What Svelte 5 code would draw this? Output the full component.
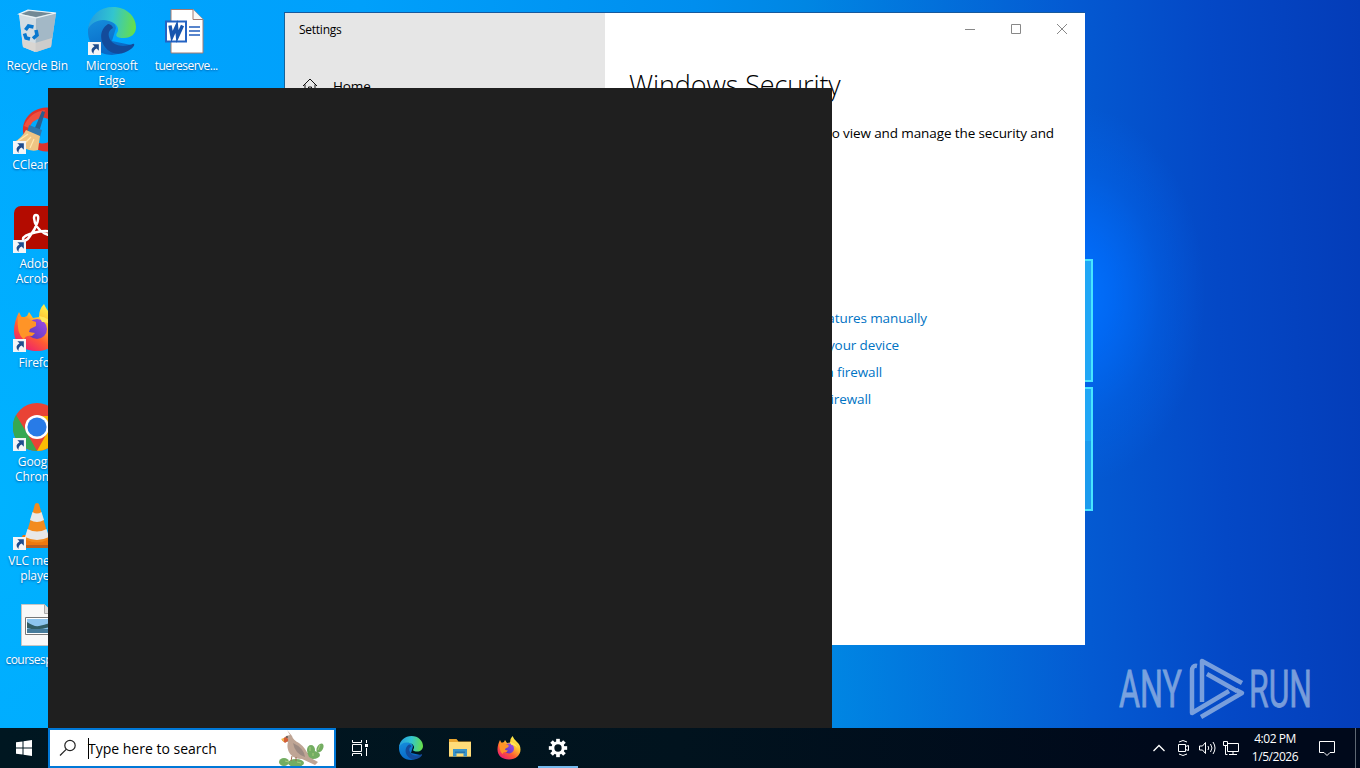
<script lang="ts">
	const shortcuts = [
		{ icon: 'bin', lines: ['Recycle Bin'], row: 1, col: 1 },
		{ icon: 'ccleaner', lines: ['CCleaner'], row: 2, col: 1, linked: true },
		{ icon: 'acrobat', lines: ['Adobe', 'Acrobat'], row: 3, col: 1, linked: true },
		{ icon: 'firefox', lines: ['Firefox'], row: 4, col: 1, linked: true },
		{ icon: 'chrome', lines: ['Google', 'Chrome'], row: 5, col: 1, linked: true },
		{ icon: 'vlc', lines: ['VLC media', 'player'], row: 6, col: 1, linked: true },
		{ icon: 'image', lines: ['coursesp...'], row: 7, col: 1, tight: true },
		{ icon: 'edge', lines: ['Microsoft', 'Edge'], row: 1, col: 2, linked: true },
		{ icon: 'word', lines: ['tuereserve...'], row: 1, col: 3, tight: true }
	];

	const links = [
		{ text: 'features manually', end: 298 },
		{ text: 'your device', end: 270 },
		{ text: 'a firewall', end: 253 },
		{ text: 'firewall', end: 242 }
	];

	const tasks = ['edge', 'explorer', 'firefox', 'gear'];
</script>

{#snippet glyph(name: string, uid: string)}
	<svg class="glyph" viewBox="0 0 48 48">
		{#if name === 'bin'}
			<path d="M6 7l9-4 28 3-5 34-15 5-13-5z" fill="#b9cdd8" />
			<path d="M6 7l17 4-1 34-12-5z" fill="#d3dde3" />
			<path d="M23 11l20-5-5 34-15 5z" fill="#a3b8c6" />
			<path d="M8 7l8-3 24 2-17 4z" fill="#728995" />
			<path d="M6 7l9-4 28 3-20 5z" fill="none" stroke="#eef4f6" stroke-width="1.2" />
			<path d="M9 33l13 3 17-5-1 9-15 5-13-5z" fill="#dbd3cc" opacity=".75" />
			<g fill="none" stroke="#0878cf" stroke-width="3.6">
				<path d="M12.500 23l3-4 5 1M23 23l1 5-4 3.500M17 32l-4-1-1.500-4.500" />
			</g>
		{:else if name === 'edge'}
			<defs>
				<linearGradient id="{uid}-top" x1="0" y1=".4" x2="1" y2=".5">
					<stop stop-color="#249cdf" /><stop offset=".5" stop-color="#32c5cf" /><stop offset="1" stop-color="#68df48" />
				</linearGradient>
				<linearGradient id="{uid}-side" x1="0" y1="0" x2=".4" y2="1">
					<stop stop-color="#168fdd" /><stop offset="1" stop-color="#0868c6" />
				</linearGradient>
			</defs>
			<path d="M0 22C2 12 10 10 18 12q9 2 10 9L24 34l19 4q-6 9-19 10C9 48-1 37 0 22z" fill="url(#{uid}-side)" />
			<path d="M0 22C2 8 12 0 25 0c14 0 23 10 23 20 0 7-5 11-12 11-7 0-9-2-7-5 3-4 0-10-8-12C12 11 4 15 0 22z" fill="url(#{uid}-top)" />
			<path d="M20 17c-8 5-9 16-3 23 6 8 17 9 26 2 2-2 4-4 3-5s-3 1-5 1c-9 3-18-1-20-8-1-4 0-7 4-9-1-3-3-4-5-4z" fill="#134b9b" />
		{:else if name === 'word'}
			<path d="M9 2.500h22l10 10V46H9z" fill="#fff" stroke="#a37b72" />
			<path d="M31 2.500v10h10" fill="#f8f8f8" stroke="#a37b72" />
			<path d="M27 20h11M27 24h11M27 28h11" stroke="#225ebc" stroke-width="1.3" />
			<rect x="4" y="14.5" width="20" height="20" fill="#fff" stroke="#2463c3" stroke-width="2" />
			<path d="M8 18.500l2 11 4.500-10 1 10 5-11" fill="none" stroke="#1855ae" stroke-width="3.400" />
		{:else if name === 'ccleaner'}
			<path d="M45 4A24 22 0 1 0 45 43L38 34A13 13 0 1 1 38 15z" fill="#de332b" />
			<path d="M11 20Q17 6 32 4l-4 8q-9 2-12 10z" fill="#f0503f" />
			<path d="M29 5l3 1-6 20-5-2z" fill="#285f8f" />
			<path d="M16 19l13 5-2 7-13-4z" fill="#2f78ae" />
			<path d="M13 24l14 6-2 14q-10 3-24-8 8-4 12-12z" fill="#efc583" />
			<path d="M5 35l10-7M10 39l8-8M17 42l4-9" stroke="#ffe7ad" stroke-width="1.2" />
		{:else if name === 'acrobat'}
			<rect x="1" y="1" width="46" height="43" rx="7" fill="#b30b00" />
			<path d="M23 10c5 0 1 12-6 21-3 5-7 6-7 3 0-5 25-11 29-6 3 6-17 0-18-15 0-2 1-3 2-3z" fill="none" stroke="#fff" stroke-width="2.5" />
		{:else if name === 'firefox'}
			<defs>
				<linearGradient id="{uid}-fire" x1=".9" y1="0" x2=".2" y2="1">
					<stop offset=".1" stop-color="#fff44f" /><stop offset=".4" stop-color="#ffbc2f" /><stop offset=".67" stop-color="#ff5c32" /><stop offset="1" stop-color="#eb1878" />
				</linearGradient>
				<linearGradient id="{uid}-globe" x1="1" y1="0" x2="0" y2="1">
					<stop stop-color="#a44de6" /><stop offset="1" stop-color="#5338ba" />
				</linearGradient>
			</defs>
			<path d="M6 8l3 6 5-2 2-4 4 6 6-1q0-8 5-13 3 7 8 11 8 6 8 16c0 12-10 20-23 20S1 40 1 27c0-7 2-13 5-19z" fill="url(#{uid}-fire)" />
			<circle cx="24" cy="25" r="10" fill="url(#{uid}-globe)" />
			<path d="M5 13q7-1 12 3l6 2 0 4-6 3-1 3 6 1-3 3q-7-1-8 4Q3 29 5 13z" fill="#ff9427" />
			<path d="M26 12q11 1 15 12-6-7-12-6z" fill="#ffe75b" />
		{:else if name === 'chrome'}
			<circle cx="24" cy="24" r="24" fill="#e94335" />
			<path d="M3 12l11 18 10 18A24 24 0 0 1 3 12z" fill="#36a853" />
			<path d="M24 13h21a24 24 0 0 1-21 35l10-18z" fill="#fbbc04" />
			<circle cx="24" cy="24" r="12" fill="#fff" />
			<circle cx="24" cy="24" r="9.6" fill="#287be7" />
		{:else if name === 'vlc'}
			<path d="M10 33h28l7 11H3z" fill="#ee780e" /><path d="M3 43h42v3H3z" fill="#b95f22" />
			<path d="M22 2q2-2 4 0l10 35q-12 7-24 0z" fill="#f38b1e" />
			<path d="M19.500 10q4.500 3 9 0l2.500 8q-7 4-14 0zM14.500 27q9.500 5 19 0l2.500 8q-12 6-24 0z" fill="#e8e8e8" />
		{:else if name === 'image'}
			<path d="M8.500 3.500h23l9 9v32h-32z" fill="#f8f8f8" stroke="#c5c5c5" />
			<path d="M31.500 3.500v9h9" fill="#ddd" stroke="#aaa" />
			<path d="M12.500 16.500h25v17h-25z" fill="#fff" stroke="#777" />
			<path d="M14 18h23v14H14z" fill="#8cc4ee" />
			<path d="M14 21q7 5 12 4t11-3v4q-13 4-23 1z" fill="#315d65" /><path d="M14 28h23v4H14z" fill="#467b9b" />
		{:else if name === 'explorer'}
			<path d="M2 6h15l4 5h25v30H2z" fill="#e9a52f" /><path d="M2 12h44v29H2z" fill="#ffdc79" />
			<path d="M10 26h28v15h-7v-6H17v6h-7z" fill="#3a94ca" /><path d="M14 31h20v3H14z" fill="#2874aa" />
		{:else if name === 'gear'}
			<g transform="translate(24 24)" fill="#fff">
				{#each [0, 45, 90, 135] as angle}
					<path d="M-4-20h8v40h-8z" transform="rotate({angle})" />
				{/each}
				<circle r="14.5" /><circle r="8" fill="#03151f" />
			</g>
		{/if}
	</svg>
{/snippet}

<main class="desktop">
	<svg class="logo-light" width="24" height="270" viewBox="0 0 24 270">
		<path d="M0 9h18v121H0zM0 137h18v122H0z" fill="#20a7f6" stroke="#48e5ff" stroke-width="2" />
		<path d="M0 190h17v68H0z" fill="#158fe5" opacity=".5" />
	</svg>

	<div class="shortcuts">
		{#each shortcuts as item}
			<div class="shortcut" class:tight={item.tight} style="grid-row: {item.row}; grid-column: {item.col}">
				<div class="picture">
					{@render glyph(item.icon, 'desk-' + item.icon)}
					{#if item.linked}
						<svg class="arrow" viewBox="0 0 12 12">
							<path d="M0 0h12v12H0z" fill="#f3f5f7" />
							<path d="M4 2h6v6L8 6Q5 7 5 11 1 7 6 4z" fill="#1e4c8d" />
						</svg>
					{/if}
				</div>
				{#each item.lines as line}<span>{line}</span>{/each}
			</div>
		{/each}
	</div>

	<section class="settings">
		<aside>
			<div class="title">Settings</div>
			<div class="home">
				<svg width="16" height="16" viewBox="0 0 16 16"><path d="M1 8l7-7 7 7M3 6.500V15h3.500V9h3v6H13V6.500" fill="none" stroke="#111" /></svg>
				<span>Home</span>
			</div>
		</aside>
		<article>
			<div class="controls">
				<svg viewBox="0 0 12 12"><path d="M1 6.500h10" /></svg>
				<svg viewBox="0 0 12 12"><path d="M1.500 1.500h9v9h-9z" /></svg>
				<svg viewBox="0 0 12 12"><path d="M1 1l10 10M11 1L1 11" /></svg>
			</div>
			<h1>Windows Security</h1>
			<p>to view and manage the security and</p>
			<nav>
				{#each links as link}
					<a href="#settings" style="width: {link.end}px">{link.text}</a>
				{/each}
			</nav>
		</article>
	</section>

	<div class="search-panel"></div>

	<svg class="watermark" width="204" height="68" viewBox="0 0 204 68">
		<g fill="#b7cce8" stroke="#b7cce8" stroke-width=".8">
			<text x="1" y="50" textLength="63" lengthAdjust="spacingAndGlyphs">ANY</text>
			<text x="131" y="50" textLength="63" lengthAdjust="spacingAndGlyphs">RUN</text>
		</g>
		<g fill="none" stroke="#b7cce8" stroke-width="4.5" stroke-linejoin="round">
			<path d="M79 9q-5-1-5 5v42l37-22M89 17l30 17" />
			<path d="M124 26L84 4v41" />
			<path d="M118 33l6 3-41 24" />
		</g>
	</svg>

	<footer>
		<button class="start" aria-label="Start">
			<svg width="16" height="16" viewBox="0 0 16 16"><path d="M0 2.300l6.500-.9v6.100H0zM7.500 1.200L16 0v7.500H7.500zM0 8.500h6.500v6.100L0 13.700zM7.500 8.500H16V16l-8.500-1.200z" fill="#fff" /></svg>
		</button>
		<div class="search">
			<svg class="lens" width="18" height="18" viewBox="0 0 18 18"><circle cx="11" cy="6.5" r="5.2" /><path d="M7.200 10.300L1 16.500" /></svg>
			<span>Type here to search</span>
			<svg class="bird" width="48" height="36" viewBox="0 0 48 36">
				<g fill="#73ad62"><ellipse cx="6" cy="32" rx="5" ry="4" /><ellipse cx="18" cy="33" rx="8" ry="4" /><ellipse cx="33" cy="20" rx="4" ry="5" /><ellipse cx="42" cy="18" rx="3" ry="5" transform="rotate(30 42 18)" /><ellipse cx="35" cy="25" rx="7" ry="4" /></g>
				<path d="M9 0l5 6q1 4 7 7 7 5 10 14l9 5-3 3-13-6q-7 0-11-4-5-6-3-13L4 11l4-5 4-1z" fill="#bfa595" />
				<path d="M7 7q4 1 3 4l-3 2-3-3z" fill="#d35e38" /><path d="M15 13q11 5 12 14-10-3-12-14z" fill="#9c8a82" />
				<path d="M3 9l3-1v4z" fill="#efb345" /><circle cx="9" cy="7" r=".8" fill="#222" />
				<path d="M14 26l-1 5M18 27v4" stroke="#9d6b4e" />
				<path d="M32 17v4M35 23v3M42 15l-2 5M7 31l4 1M19 32l4 1" stroke="#a8cd7c" />
			</svg>
		</div>
		<button class="task-view" aria-label="Task view">
			<svg width="18" height="16" viewBox="0 0 18 16" fill="none" stroke="#fff"><path d="M1.500 0v2.500h9V0M1.500 16v-2.500h9V16M1.500 4.500h9v7h-9zM15.500 0v3M15.500 8v8" /><path d="M14 4h3v3h-3z" fill="#fff" stroke="none" /></svg>
		</button>
		<div class="tasks">
			{#each tasks as task}
				<div class="task" class:active={task === 'gear'}>{@render glyph(task, 'bar-' + task)}</div>
			{/each}
		</div>
		<div class="tray">
			<svg viewBox="0 0 18 18"><path d="M3.500 12L9 6.500l5.500 5.500" stroke-width="1.300" /></svg>
			<svg viewBox="0 0 18 18"><path d="M4.500 5.500h7v7h-7zM11.500 7.500l3-1v5l-3-1M5 3q4-3 8 0M5 15q4 3 8 0" /></svg>
			<svg viewBox="0 0 18 18"><path d="M1.500 7h3l3-3.500v11L4.500 11h-3zM10 7q1.500 2 0 4M12.500 5q3 4 0 8M15 3q4 6 0 12" /></svg>
			<svg viewBox="0 0 18 18"><path d="M5.500 4.500h11v8h-11zM11 12.500v3M7 15.500h8M1.500 2.500h4v4h-4zM3.500 6.500v9h2" /></svg>
		</div>
		<div class="clock"><span>4:02 PM</span><span>1/5/2026</span></div>
		<svg class="notice" width="18" height="18" viewBox="0 0 18 18"><path d="M1.500 2.500h15v11H12l-3 3-3-3H1.500z" fill="none" stroke="#fff" /></svg>
		<div class="peek"></div>
	</footer>
</main>

<style>
	:global(body) {
		overflow: hidden;
	}

	.desktop {
		position: relative;
		width: 1360px;
		height: 768px;
		overflow: hidden;
		background:
			radial-gradient(ellipse 130px 190px at 1075px 295px, #0072ff 0%, #006effbb 30%, #006eff44 65%, transparent 100%),
			radial-gradient(ellipse 300px 600px at 0 500px, #00b2ff 0%, transparent 100%),
			linear-gradient(88deg, #00a6ff 0%, #00a0fb 28%, #008eee 52%, #0086e3 60%, #045ad2 79%, #0448c6 89%, #043cb8 100%);
		font-family: 'Open Sans', 'Noto Sans', sans-serif;
		color: #000;
	}

	.logo-light {
		position: absolute;
		left: 1074px;
		top: 251px;
	}

	.shortcuts {
		display: grid;
		grid-template-columns: repeat(3, 74.5px);
		grid-template-rows: repeat(7, 99px);
		width: max-content;
	}

	.shortcut {
		display: flex;
		flex-direction: column;
		align-items: center;
		padding-top: 7px;
		font-size: 12px;
		line-height: 15px;
		letter-spacing: -0.1px;
		color: #fff;
		text-shadow: 0 1px 2px #0059a3;
		white-space: nowrap;
	}

	.shortcut.tight {
		letter-spacing: -0.5px;
	}

	.shortcut.tight:nth-child(7) {
		padding-right: 9px;
	}

	.shortcut.tight:nth-child(7) .picture {
		margin-right: -9px;
	}

	.picture {
		position: relative;
		width: 48px;
		height: 48px;
		margin-bottom: 3px;
	}

	.glyph {
		display: block;
		width: 100%;
		height: 100%;
	}

	.arrow {
		position: absolute;
		left: 0;
		bottom: 0;
		width: 13px;
		height: 13px;
	}

	.settings {
		position: absolute;
		left: 284px;
		top: 12px;
		width: 801px;
		height: 633px;
		box-sizing: border-box;
		border-left: 1px solid #17639a;
		border-top: 1px solid #17599d;
		display: flex;
		background: #fff;
	}

	aside {
		width: 320px;
		background: #e6e6e6;
	}

	.title {
		padding: 8px 14px;
		font-size: 12px;
		line-height: 18px;
		letter-spacing: -0.25px;
	}

	.home {
		display: flex;
		align-items: center;
		gap: 15px;
		padding: 29px 17px;
		font-size: 13.5px;
		line-height: 20px;
		letter-spacing: -0.1px;
	}

	article {
		flex: 1;
		padding-left: 24px;
	}

	.controls {
		display: flex;
		justify-content: flex-end;
		gap: 34px;
		padding: 10px 17px 0 0;
	}

	.controls svg {
		width: 12px;
		height: 12px;
		fill: none;
		stroke: #888;
	}

	h1 {
		margin: 30px 0 0;
		font-size: 27px;
		font-weight: 300;
		line-height: 40px;
		letter-spacing: -0.12px;
		white-space: nowrap;
	}

	p {
		width: 425px;
		margin: 18px 0 0;
		font-size: 13.5px;
		line-height: 20px;
		letter-spacing: -0.11px;
		text-align: right;
	}

	nav {
		padding-top: 162px;
	}

	nav a {
		display: block;
		color: #0073c4;
		font-size: 13.5px;
		line-height: 27px;
		letter-spacing: -0.11px;
		text-align: right;
		text-decoration: none;
	}

	.search-panel {
		position: absolute;
		left: 48px;
		top: 88px;
		width: 784px;
		height: 640px;
		background: #1f1f1f;
	}

	.watermark {
		position: absolute;
		left: 1118px;
		top: 657px;
		overflow: visible;
		opacity: 0.65;
		font-family: Roboto, sans-serif;
		font-size: 52px;
	}

	footer {
		position: absolute;
		left: 0;
		bottom: 0;
		width: 100%;
		height: 40px;
		display: flex;
		align-items: center;
		background: linear-gradient(90deg, #001721, #01131e 50%, #00091b 85%);
		color: #fff;
	}

	button {
		display: flex;
		align-items: center;
		justify-content: center;
		width: 48px;
		height: 40px;
		padding: 0;
		border: 0;
		background: none;
	}

	.search {
		width: 288px;
		height: 40px;
		box-sizing: border-box;
		border: 2px solid #0078d7;
		display: flex;
		align-items: center;
		background: #fff;
		color: #000;
		font-size: 14px;
	}

	.lens {
		margin: 0 10px 0 9px;
		fill: none;
		stroke: #222;
		stroke-width: 1.2;
	}

	.search span {
		margin-left: 1px;
		padding-top: 1px;
		border-left: 1px solid #000;
		line-height: 20px;
		text-indent: -1px;
	}

	.bird {
		margin: 0 8px 0 auto;
	}

	.tasks {
		display: flex;
		gap: 1px;
		margin-left: 3px;
	}

	.task {
		width: 48px;
		height: 40px;
		box-sizing: border-box;
		padding: 8px 12px;
	}

	.task.active {
		width: 40px;
		margin-left: 4px;
		padding: 9px 9px 7px;
		border-bottom: 2px solid #76b9ed;
	}

	.task .glyph {
		width: 24px;
		height: 24px;
	}

	.task.active .glyph {
		width: 22px;
		height: 22px;
	}

	.tray {
		display: flex;
		gap: 6px;
		margin-left: auto;
	}

	.tray svg {
		width: 18px;
		height: 18px;
		fill: none;
		stroke: #fff;
	}

	.clock {
		width: 70px;
		display: flex;
		flex-direction: column;
		align-items: center;
		font-size: 12px;
		line-height: 18px;
		letter-spacing: -0.45px;
	}

	.notice {
		margin: 0 19px 0 8px;
	}

	.peek {
		width: 4px;
		height: 40px;
		border-left: 1px solid #5e6873;
	}
</style>
